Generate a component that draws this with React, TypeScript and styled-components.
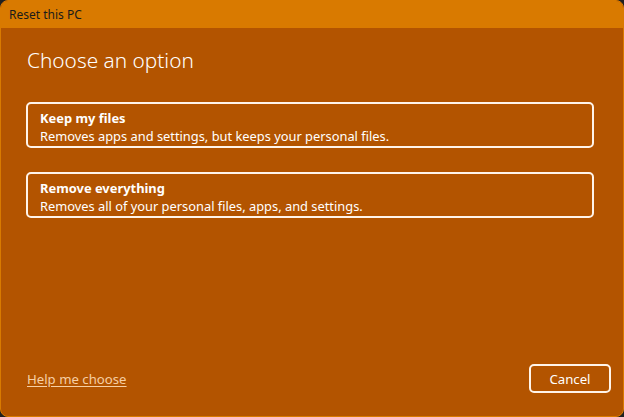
import React from 'react';
import styled, { createGlobalStyle } from 'styled-components';

const GlobalStyle = createGlobalStyle`
    html, body {
        margin: 0;
        padding: 0;
        background: #202020;
    }
    body {
        font-family: 'Noto Sans', 'Open Sans', sans-serif;
    }
`;

const Window = styled.div`
    width: 624px;
    height: 417px;
    box-sizing: border-box;
    display: flex;
    flex-direction: column;
    background: #b35400;
    border: 1px solid #d97a00;
    border-radius: 8px;
    overflow: hidden;
`;

const TitleBar = styled.div`
    height: 27px;
    flex: none;
    display: flex;
    align-items: center;
    padding-left: 8px;
    background: #d97a00;
    color: #1a1a1a;
    font-size: 12px;
`;

const Body = styled.div`
    flex: 1;
    display: flex;
    flex-direction: column;
    padding: 18px 29px 23px 25px;
`;

const Heading = styled.h1`
    margin: 0 0 27px 1px;
    font-size: 20.8px;
    font-weight: 300;
    color: #ffffff;
    line-height: 29px;
`;

const Options = styled.div`
    display: flex;
    flex-direction: column;
    gap: 24px;
`;

const OptionCard = styled.button`
    display: flex;
    flex-direction: column;
    align-items: flex-start;
    height: 46px;
    box-sizing: border-box;
    padding: 5px 12px 0;
    background: transparent;
    border: 2px solid #fff4ea;
    border-radius: 5px;
    color: #ffffff;
    font-family: inherit;
    text-align: left;
    cursor: pointer;
`;

const OptionTitle = styled.span`
    font-size: 12.9px;
    font-weight: 700;
    line-height: 18px;
`;

const OptionText = styled.span`
    font-size: 12.85px;
    line-height: 18px;
`;

const Footer = styled.div`
    margin-top: auto;
    display: flex;
    align-items: center;
    justify-content: space-between;
`;

const HelpLink = styled.a`
    margin-left: 1px;
    color: #f6cfa5;
    font-size: 13.2px;
    text-decoration: underline;
    text-underline-offset: 2px;
    cursor: pointer;
`;

const CancelButton = styled.button`
    width: 82px;
    height: 29px;
    margin-right: -17px;
    background: transparent;
    border: 2px solid #fff4ea;
    border-radius: 5px;
    color: #ffffff;
    font-family: inherit;
    font-size: 13.2px;
    cursor: pointer;
`;

const options = [
    { title: 'Keep my files', text: 'Removes apps and settings, but keeps your personal files.' },
    { title: 'Remove everything', text: 'Removes all of your personal files, apps, and settings.' },
];

export default function App() {
    return (
        <>
            <GlobalStyle />
            <Window>
                <TitleBar>Reset this PC</TitleBar>
                <Body>
                    <Heading>Choose an option</Heading>
                    <Options>
                        {options.map((o) => (
                            <OptionCard key={o.title}>
                                <OptionTitle>{o.title}</OptionTitle>
                                <OptionText>{o.text}</OptionText>
                            </OptionCard>
                        ))}
                    </Options>
                    <Footer>
                        <HelpLink>Help me choose</HelpLink>
                        <CancelButton>Cancel</CancelButton>
                    </Footer>
                </Body>
            </Window>
        </>
    );
}
